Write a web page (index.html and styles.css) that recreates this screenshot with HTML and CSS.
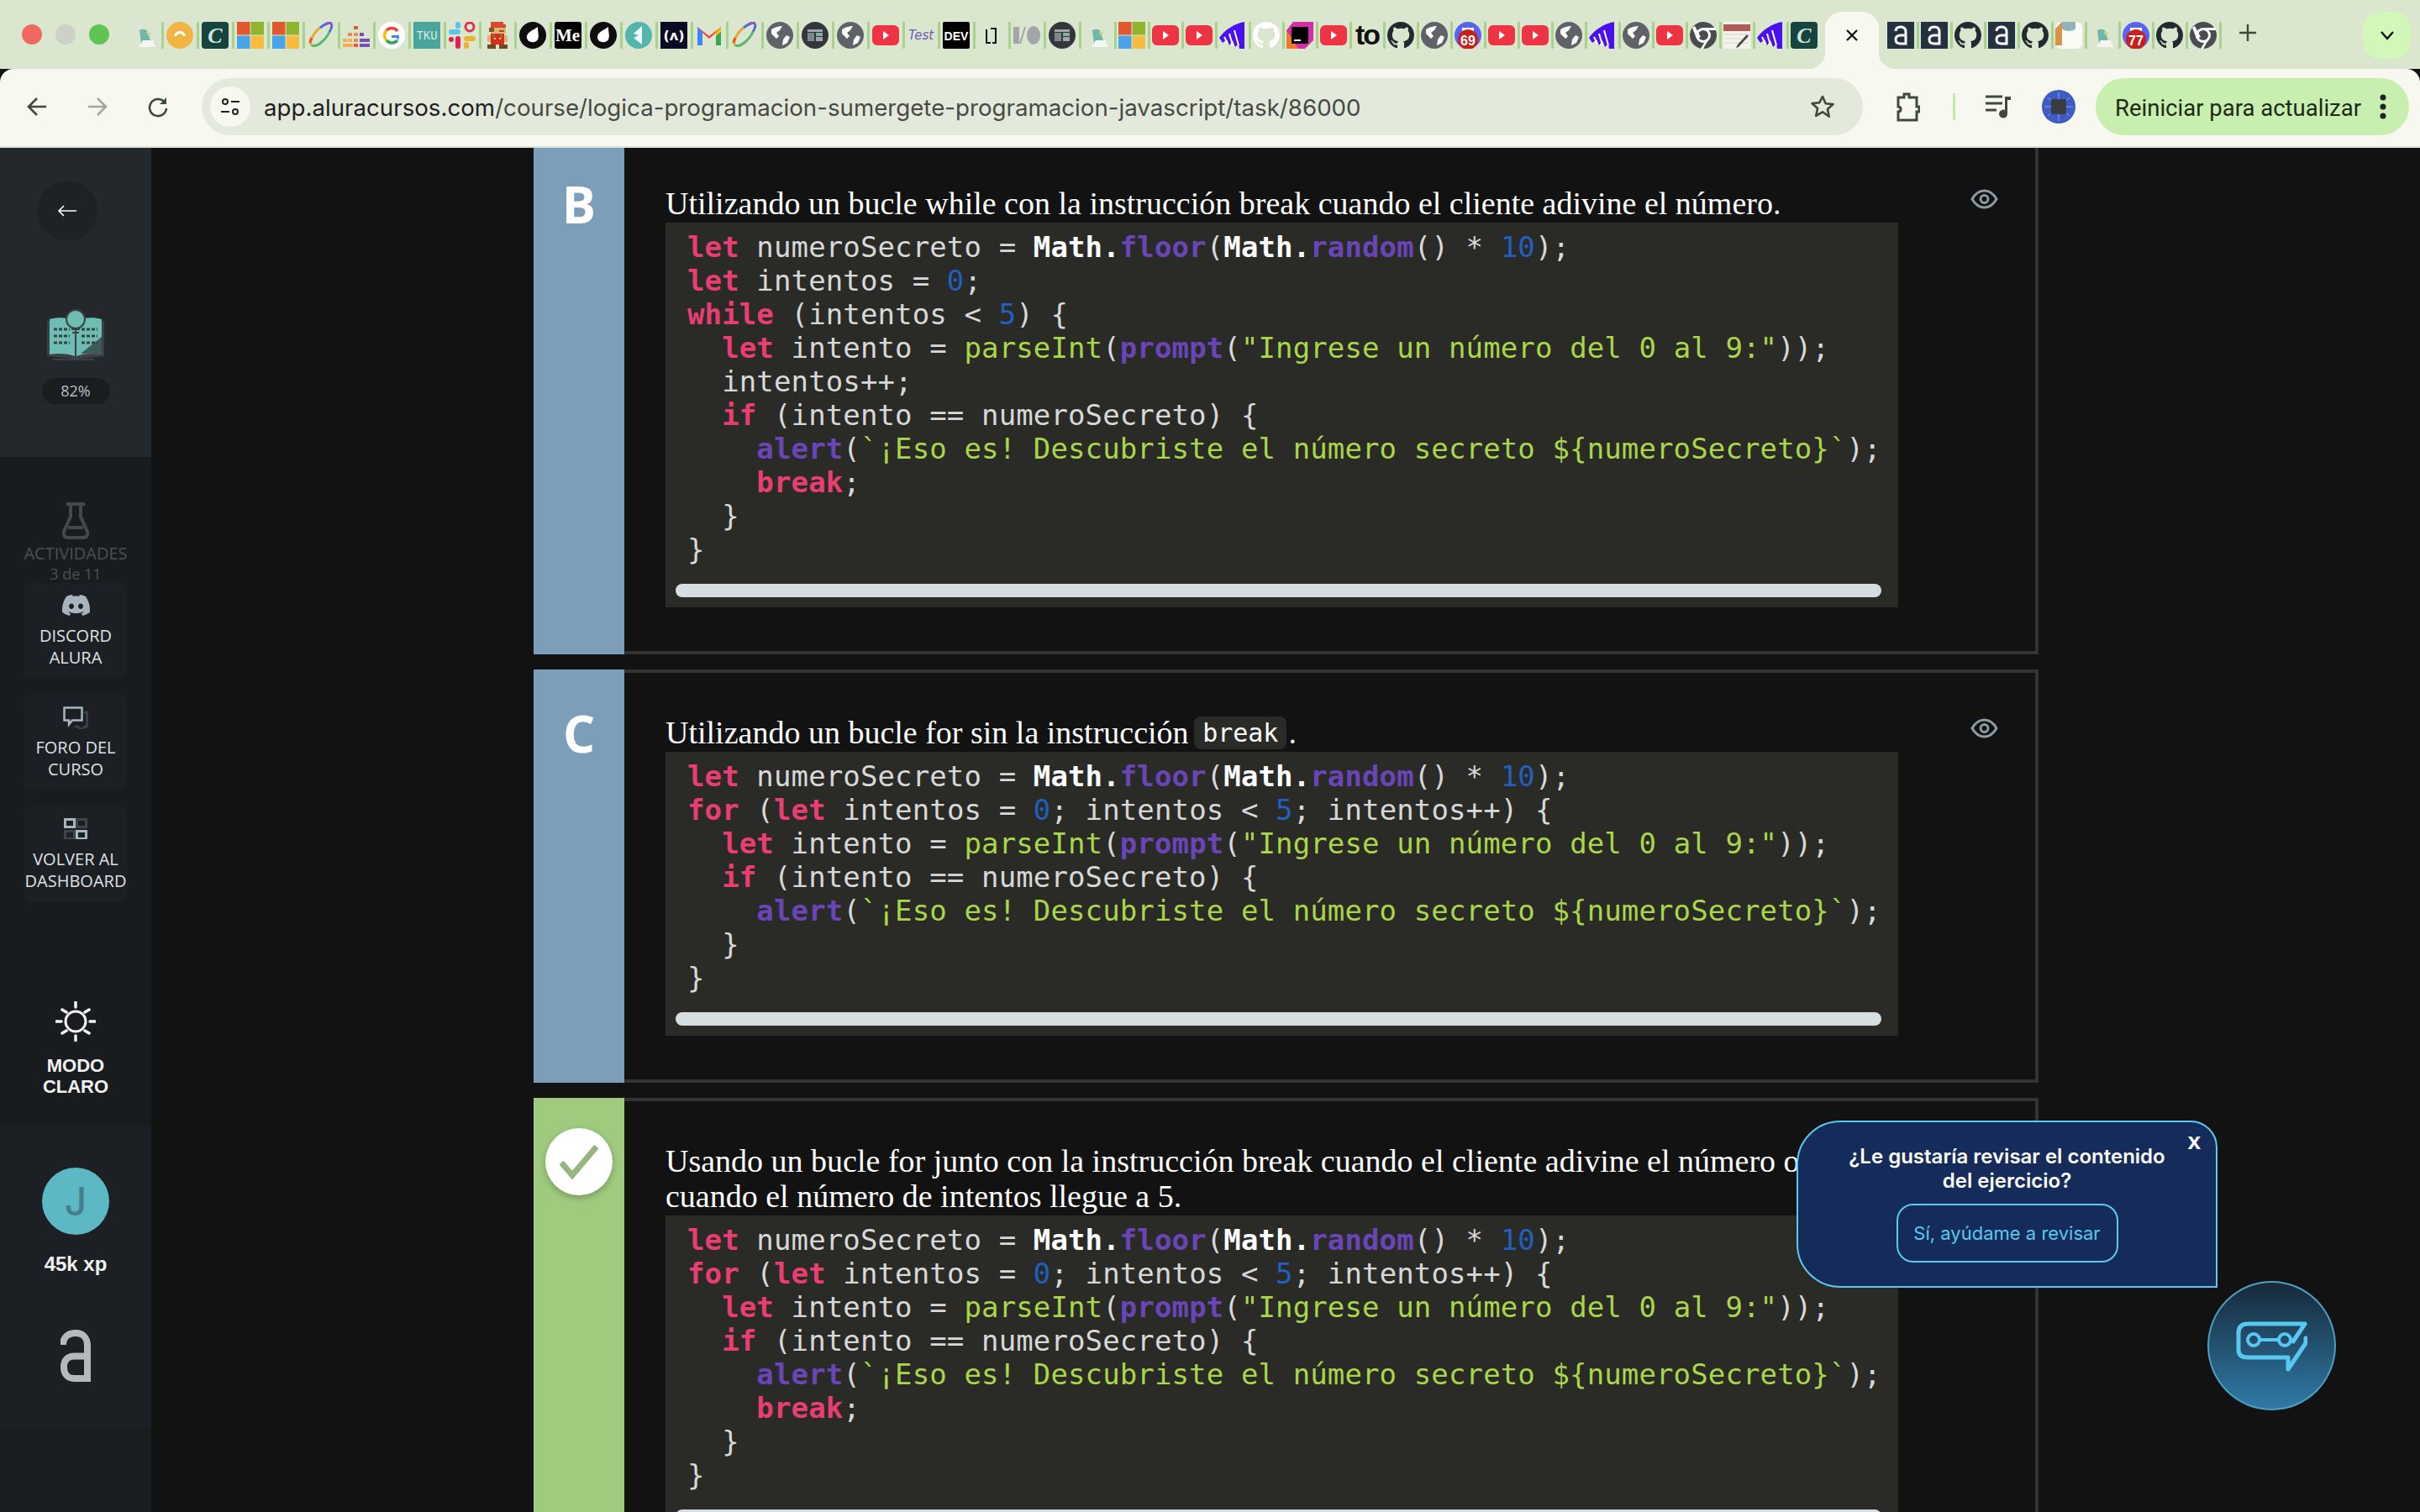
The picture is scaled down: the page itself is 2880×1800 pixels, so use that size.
FILE: index.html
```html
<!DOCTYPE html>
<html lang="es">
<head>
    <meta charset="UTF-8">
    <title>Lógica de programación - Alura</title>
    <link rel="stylesheet" href="styles.css">
</head>
<body>
    <svg class="defs" width="0" height="0">
        <symbol id="parrot" viewBox="0 0 32 32"><path d="M8 2h6v7H8z" fill="#dfe6df"/><path d="M10 10c6-3 11 0 11 6l3 10H12z" fill="#6fb7a6"/><path d="M14 22h12l3 8H9z" fill="#f4f6f2"/><path d="M18 11l6 3-5 2z" fill="#c9d08a"/></symbol>
        <symbol id="ms" viewBox="0 0 32 32"><path d="M0 0h15.500v15.500H0z" fill="#e2582e"/><path d="M16.500 0H32v15.500H16.500z" fill="#8fb52e"/><path d="M0 16.500h15.500V32H0z" fill="#4aa3e8"/><path d="M16.500 16.500H32V32H16.500z" fill="#f6bc3e"/></symbol>
        <symbol id="planet" viewBox="0 0 32 32"><path d="M5 28C1 24 8 12 15 7" fill="none" stroke="#e8a63a" stroke-width="3"/><path d="M5 28c6 3 17-7 21-16" fill="none" stroke="#55b86a" stroke-width="3"/><path d="M15 7c5-4 11-7 13-5 2 3 0 7-2 10" fill="none" stroke="#4c6fd8" stroke-width="3"/><path d="M22 3c2-2 5-2 6-1" fill="none" stroke="#a04fc0" stroke-width="3"/><path d="M3 25c0-2 1-4 2-6" fill="none" stroke="#e2582e" stroke-width="3"/></symbol>
        <symbol id="drop" viewBox="0 0 32 32"><circle cx="16" cy="16" r="16" fill="#0e0e0e"/><path d="M22 6c0 8 2 10 0 15-3 5-12 4-13-2-1-6 7-9 13-13z" fill="#fff"/></symbol>
        <symbol id="globe" viewBox="0 0 32 32"><circle cx="16" cy="16" r="16" fill="#5f6368"/><path d="M6 9c5-3 9-4 13-4l-3 5-4 3 3 4-3 3-6-6zM24 16l4 2-3 7-6 3 1-7z" fill="#fff"/></symbol>
        <symbol id="darkc" viewBox="0 0 32 32"><circle cx="16" cy="16" r="16" fill="#33373c"/><path d="M7 9h18v3H7z" fill="#9fa6a8"/><path d="M7 13h8v10H7z" fill="#7a8a8c"/><path d="M17 13h8v4h-8z" fill="#7fb0a8"/><path d="M17 18h8v5h-8z" fill="#9fa6a8"/></symbol>
        <symbol id="yt" viewBox="0 0 32 32"><rect y="4" width="32" height="24" rx="6" fill="#ee3344"/><path d="M13 11l7 5-7 5z" fill="#fff"/></symbol>
        <symbol id="ghost" viewBox="0 0 32 32"><path d="M30 0v32h-6l-1-6-4 4-3-8-4 6-3-7-5 4-4-6C6 10 18 2 30 0z" fill="#4a10f0"/><path d="M12 14l4 14M18 10l5 18M6 18l4 8" stroke="#fff" stroke-width="2"/></symbol>
        <symbol id="gh" viewBox="0 0 16 16"><path d="M8 0C3.580 0 0 3.580 0 8c0 3.540 2.290 6.530 5.470 7.590.4.070.55-.17.55-.38 0-.19-.01-.82-.01-1.490-2.010.37-2.530-.49-2.690-.94-.09-.23-.48-.94-.82-1.130-.28-.15-.68-.52-.01-.53.63-.01 1.080.58 1.230.82.72 1.210 1.870.87 2.330.66.07-.52.28-.87.51-1.070-1.780-.2-3.640-.89-3.640-3.950 0-.87.31-1.590.82-2.150-.08-.2-.36-1.020.08-2.120 0 0 .67-.21 2.200.82.64-.18 1.320-.27 2-.27.68 0 1.360.09 2 .27 1.530-1.040 2.200-.82 2.200-.82.44 1.100.16 1.920.08 2.120.51.56.82 1.270.82 2.150 0 3.070-1.870 3.750-3.650 3.950.29.25.54.73.54 1.480 0 1.070-.01 1.930-.01 2.200 0 .21.15.46.55.38A8.013 8.013 0 0016 8c0-4.420-3.580-8-8-8z"/></symbol>
        <symbol id="chrome" viewBox="0 0 32 32"><circle cx="16" cy="16" r="16" fill="#4a4d50"/><circle cx="16" cy="16" r="9" fill="#fff"/><circle cx="16" cy="16" r="6" fill="#4a4d50"/><path d="M16 7h14l2 3H17zM8 20L3 7l3-2 7 13zM23 20l-7 12h-3l7-12z" fill="#fff"/></symbol>
        <symbol id="alura" viewBox="0 0 32 32"><rect width="32" height="32" fill="#233240"/><path d="M10 11c0-3 2-5 6-5s6 2 6 6v14h-6c-4 0-6-2-6-5s2-5 6-5h6" fill="none" stroke="#fff" stroke-width="3"/></symbol>
        <symbol id="discord" viewBox="0 0 16 16"><path d="M13.545 2.907a13.227 13.227 0 0 0-3.257-1.011.05.05 0 0 0-.052.025c-.141.25-.297.577-.406.833a12.19 12.19 0 0 0-3.658 0 8.258 8.258 0 0 0-.412-.833.051.051 0 0 0-.052-.025c-1.125.194-2.22.534-3.257 1.011a.041.041 0 0 0-.021.018C.356 6.024-.213 9.047.066 12.032c.001.014.01.028.021.037a13.276 13.276 0 0 0 3.995 2.02.05.05 0 0 0 .056-.019c.308-.42.582-.863.818-1.329a.05.05 0 0 0-.01-.059.051.051 0 0 0-.018-.011 8.875 8.875 0 0 1-1.248-.595.05.05 0 0 1-.02-.066.051.051 0 0 1 .015-.019c.084-.063.168-.129.248-.195a.05.05 0 0 1 .051-.007c2.619 1.196 5.454 1.196 8.041 0a.052.052 0 0 1 .053.007c.08.066.164.132.248.195a.051.051 0 0 1-.004.085 8.254 8.254 0 0 1-1.249.594.05.05 0 0 0-.03.03.052.052 0 0 0 .003.041c.24.465.515.909.817 1.329a.05.05 0 0 0 .056.019 13.235 13.235 0 0 0 4.001-2.02.049.049 0 0 0 .021-.037c.334-3.451-.559-6.449-2.366-9.106a.034.034 0 0 0-.02-.019Zm-8.198 7.307c-.789 0-1.438-.724-1.438-1.612 0-.889.637-1.613 1.438-1.613.807 0 1.45.73 1.438 1.613 0 .888-.637 1.612-1.438 1.612Zm5.316 0c-.788 0-1.438-.724-1.438-1.612 0-.889.637-1.613 1.438-1.613.807 0 1.451.73 1.438 1.613 0 .888-.631 1.612-1.438 1.612Z"/></symbol>
        <symbol id="eye" viewBox="0 0 33 24"><path d="M2 12C6 5 11 2 16.500 2S27 5 31 12c-4 7-9 10-14.500 10S6 19 2 12z" fill="none" stroke="#8b9ba6" stroke-width="3"/><circle cx="16.500" cy="12" r="4.500" fill="none" stroke="#8b9ba6" stroke-width="3"/></symbol>
    </svg>

    <div class="tabstrip">
        <div class="lights">
            <span class="light light-red"></span>
            <span class="light light-off"></span>
            <span class="light light-green"></span>
        </div>
        <div class="tabs">
            <span class="tab"><svg class="fav"><use href="#parrot"/></svg></span>
            <span class="tab"><svg class="fav" viewBox="0 0 32 32"><circle cx="16" cy="16" r="16" fill="#f2b544"/><path d="M9 17c2-8 12-8 14 0l-3 0c-2-4-6-4-8 0z" fill="#fff"/></svg></span>
            <span class="tab"><svg class="fav" viewBox="0 0 32 32"><rect width="32" height="32" rx="4" fill="#17443f"/><text x="16" y="25" text-anchor="middle" class="fav-c">C</text></svg></span>
            <span class="tab"><svg class="fav"><use href="#ms"/></svg></span>
            <span class="tab"><svg class="fav"><use href="#ms"/></svg></span>
            <span class="tab"><svg class="fav"><use href="#planet"/></svg></span>
            <span class="tab"><svg class="fav" viewBox="0 0 32 32"><path d="M13 5h5v4h-5z" fill="#e25a3a"/><path d="M6 13h5v4H6zM13 13h5v4h-5z" fill="#e8885a"/><path d="M20 13h5v4h-5z" fill="#7a4fb0"/><path d="M0 20h5v4H0zM6 20h5v4H6z" fill="#eeb050"/><path d="M13 20h5v4h-5z" fill="#e8885a"/><path d="M20 20h12v4H20z" fill="#7a4fb0"/><path d="M0 26h12v4H0z" fill="#eeb050"/><path d="M13 26h5v4h-5z" fill="#e25a3a"/><path d="M20 26h12v4H20z" fill="#7a4fb0"/></svg></span>
            <span class="tab"><svg class="fav" viewBox="0 0 32 32"><circle cx="16" cy="16" r="16" fill="#fff"/><path d="M23 11a8.500 8.500 0 0 0-13-1" fill="none" stroke="#ea4335" stroke-width="3.500"/><path d="M10 10a8.500 8.500 0 0 0 0 12" fill="none" stroke="#fbbc05" stroke-width="3.500"/><path d="M10 22a8.500 8.500 0 0 0 13 0" fill="none" stroke="#34a853" stroke-width="3.500"/><path d="M24 22c1-2 1-4 1-6h-9v3h6" fill="#4285f4"/></svg></span>
            <span class="tab"><svg class="fav" viewBox="0 0 32 32"><rect width="32" height="32" fill="#4aa59a"/><text x="16" y="21" text-anchor="middle" class="fav-tku">TKU</text></svg></span>
            <span class="tab"><svg class="fav" viewBox="0 0 32 32"><rect x="0" y="9" width="14" height="6" rx="3" fill="#5cc4ec"/><rect x="8" y="0" width="6" height="8" rx="3" fill="#5cc4ec"/><circle cx="25" cy="6" r="5" fill="none" stroke="#d8354f" stroke-width="3"/><rect x="18" y="17" width="14" height="6" rx="3" fill="#ecb22e"/><rect x="18" y="24" width="6" height="8" rx="3" fill="#ecb22e"/><rect x="0" y="18" width="6" height="6" rx="3" fill="#e01e5a"/><rect x="8" y="17" width="6" height="15" rx="3" fill="#e01e5a"/></svg></span>
            <span class="tab"><svg class="fav" viewBox="0 0 32 32"><path d="M8 0h15v3h3v4H8z" fill="#d84a2c"/><path d="M8 7h18v7H8z" fill="#e8b070"/><path d="M6 7h6v5H6zM18 10h6v2h-6z" fill="#7a5a30"/><path d="M8 14h16v13H8z" fill="#d82c20"/><path d="M10 14h3v6h-3zM19 14h3v6h-3z" fill="#8a6a30"/><path d="M12 19h2v2h-2zM18 19h2v2h-2z" fill="#f2d050"/><path d="M4 16h4v8H4zM24 16h4v8h-4z" fill="#e8b070"/><path d="M4 27h10v5H4zM18 27h10v5H18z" fill="#6a4a20"/></svg></span>
            <span class="tab"><svg class="fav"><use href="#drop"/></svg></span>
            <span class="tab"><svg class="fav" viewBox="0 0 32 32"><rect width="32" height="32" rx="3" fill="#000"/><text x="1" y="23" class="fav-me">Me</text></svg></span>
            <span class="tab"><svg class="fav"><use href="#drop"/></svg></span>
            <span class="tab"><svg class="fav" viewBox="0 0 32 32"><circle cx="16" cy="16" r="16" fill="#55b5ae"/><path d="M20 5v22l-10-8 6-3-6-2z" fill="#fff" opacity=".9"/></svg></span>
            <span class="tab"><svg class="fav" viewBox="0 0 32 32"><rect width="32" height="32" fill="#0a0a23"/><text x="16" y="22" text-anchor="middle" class="fav-fcc">(ʌ)</text></svg></span>
            <span class="tab"><svg class="fav" viewBox="0 0 32 32"><path d="M2 6l14 11L30 6v22h-6V13l-8 7-8-7v15H2z" fill="#ea4335"/><path d="M2 6v22h6V12z" fill="#4285f4"/><path d="M30 6v22h-6V12z" fill="#34a853"/><path d="M24 12l6-6v6l-6 5z" fill="#fbbc05"/></svg></span>
            <span class="tab"><svg class="fav"><use href="#planet"/></svg></span>
            <span class="tab"><svg class="fav"><use href="#globe"/></svg></span>
            <span class="tab"><svg class="fav"><use href="#darkc"/></svg></span>
            <span class="tab"><svg class="fav"><use href="#globe"/></svg></span>
            <span class="tab"><svg class="fav"><use href="#yt"/></svg></span>
            <span class="tab"><svg class="fav" viewBox="0 0 32 32"><text x="1" y="21" textLength="30" lengthAdjust="spacingAndGlyphs" class="fav-test">Test</text></svg></span>
            <span class="tab"><svg class="fav" viewBox="0 0 32 32"><rect width="32" height="32" rx="2" fill="#000"/><text x="16" y="22" text-anchor="middle" class="fav-dev">DEV</text></svg></span>
            <span class="tab"><svg class="fav" viewBox="0 0 32 32"><path d="M10 9v16h5" fill="none" stroke="#111" stroke-width="2"/><path d="M15 8h6v17h-4" fill="none" stroke="#111" stroke-width="2"/></svg></span>
            <span class="tab"><svg class="fav" viewBox="0 0 32 32"><path d="M0 6h7v20H0z" fill="#a3a6a9"/><path d="M8 26L14 6" stroke="#a3a6a9" stroke-width="2"/><ellipse cx="24" cy="16" rx="8" ry="11" fill="#a3a6a9"/></svg></span>
            <span class="tab"><svg class="fav"><use href="#darkc"/></svg></span>
            <span class="tab"><svg class="fav"><use href="#parrot"/></svg></span>
        </div>
        <div class="tabs tabs-small">
            <span class="tab"><svg class="fav"><use href="#ms"/></svg></span>
            <span class="tab"><svg class="fav"><use href="#yt"/></svg></span>
            <span class="tab"><svg class="fav"><use href="#yt"/></svg></span>
            <span class="tab"><svg class="fav"><use href="#ghost"/></svg></span>
            <span class="tab"><svg class="fav fav-ghwhite"><use href="#gh"/></svg></span>
            <span class="tab"><svg class="fav" viewBox="0 0 32 32"><path d="M8 0h24v22L22 32H0V10z" fill="#d62ea8"/><path d="M0 10v22h14z" fill="#f07a2a"/><rect x="6" y="6" width="20" height="20" fill="#000"/><rect x="9" y="21" width="8" height="2" fill="#fff"/></svg></span>
            <span class="tab"><svg class="fav"><use href="#yt"/></svg></span>
            <span class="tab"><svg class="fav" viewBox="0 0 32 32"><text x="16" y="27" text-anchor="middle" class="fav-to">to</text></svg></span>
            <span class="tab"><svg class="fav fav-gh"><use href="#gh"/></svg></span>
            <span class="tab"><svg class="fav"><use href="#globe"/></svg></span>
            <span class="tab"><svg class="fav" viewBox="0 0 32 32"><circle cx="16" cy="16" r="16" fill="#5865f2"/><path d="M9 7h14v6H9z" fill="#fff"/><circle cx="16" cy="21" r="12" fill="#c5221f"/><text x="16" y="28" text-anchor="middle" class="fav-badge">69</text></svg></span>
            <span class="tab"><svg class="fav"><use href="#yt"/></svg></span>
            <span class="tab"><svg class="fav"><use href="#yt"/></svg></span>
            <span class="tab"><svg class="fav"><use href="#globe"/></svg></span>
            <span class="tab"><svg class="fav"><use href="#ghost"/></svg></span>
            <span class="tab"><svg class="fav"><use href="#globe"/></svg></span>
            <span class="tab"><svg class="fav"><use href="#yt"/></svg></span>
            <span class="tab"><svg class="fav"><use href="#chrome"/></svg></span>
            <span class="tab"><svg class="fav" viewBox="0 0 32 32"><rect width="32" height="32" fill="#f4f2ea"/><path d="M0 3h32v8H0z" fill="#b25a55"/><path d="M2 15h28M2 20h28M2 25h28" stroke="#d8d6cc"/><path d="M30 17L18 30l-3 1 2-4L28 15z" fill="#4a4a4a"/></svg></span>
            <span class="tab"><svg class="fav"><use href="#ghost"/></svg></span>
            <span class="tab tab-nosep"><svg class="fav" viewBox="0 0 32 32"><rect width="32" height="32" rx="4" fill="#17443f"/><text x="16" y="25" text-anchor="middle" class="fav-c">C</text></svg></span>
        </div>
        <div class="tab-active">
            <svg class="tab-close" viewBox="0 0 16 16"><path d="M2 2l12 12M14 2L2 14" fill="none" stroke="#111" stroke-width="2.200"/></svg>
        </div>
        <div class="tabs tabs-small tabs-after">
            <span class="tab"><svg class="fav"><use href="#alura"/></svg></span>
            <span class="tab"><svg class="fav"><use href="#alura"/></svg></span>
            <span class="tab"><svg class="fav fav-gh"><use href="#gh"/></svg></span>
            <span class="tab"><svg class="fav"><use href="#alura"/></svg></span>
            <span class="tab"><svg class="fav fav-gh"><use href="#gh"/></svg></span>
            <span class="tab"><svg class="fav" viewBox="0 0 32 32"><rect width="32" height="32" rx="7" fill="#fbfbf6"/><path d="M0 8c3-3 5-5 8-8v28H0z" fill="#d6914a"/><path d="M8 0h16v8c-3 4-13 4-16 0z" fill="#8fb3b8"/></svg></span>
            <span class="tab"><svg class="fav"><use href="#parrot"/></svg></span>
            <span class="tab"><svg class="fav" viewBox="0 0 32 32"><circle cx="16" cy="16" r="16" fill="#5865f2"/><path d="M9 7h14v6H9z" fill="#fff"/><circle cx="16" cy="21" r="12" fill="#c5221f"/><text x="16" y="28" text-anchor="middle" class="fav-badge">77</text></svg></span>
            <span class="tab"><svg class="fav fav-gh"><use href="#gh"/></svg></span>
            <span class="tab"><svg class="fav"><use href="#chrome"/></svg></span>
        </div>
        <svg class="new-tab" viewBox="0 0 22 22"><path d="M11 1v20M1 11h20" fill="none" stroke="#3f4a3a" stroke-width="2.400"/></svg>
        <div class="tab-search">
            <svg viewBox="0 0 18 12"><path d="M2 2l7 8 7-8" fill="none" stroke="#111" stroke-width="2.400"/></svg>
        </div>
    </div>

    <div class="toolbar">
        <span class="nav-btn"><svg viewBox="0 0 26 26"><path d="M24 13H3M13 3L3 13l10 10" fill="none" stroke="#3f4a3a" stroke-width="2.600"/></svg></span>
        <span class="nav-btn"><svg viewBox="0 0 26 26"><path d="M2 13h21M13 3l10 10-10 10" fill="none" stroke="#a3a8a0" stroke-width="2.600"/></svg></span>
        <span class="nav-btn"><svg viewBox="0 0 26 26"><path d="M21 8a10 10 0 1 0 2 7" fill="none" stroke="#3f4a3a" stroke-width="2.600"/><path d="M23 2v8h-8z" fill="#3f4a3a"/></svg></span>
        <div class="omnibox">
            <span class="site-info"><svg viewBox="0 0 24 24"><circle cx="6" cy="6" r="3" fill="none" stroke="#222" stroke-width="2"/><path d="M13 6h10M1 18h10" stroke="#222" stroke-width="2"/><circle cx="18" cy="18" r="3" fill="none" stroke="#222" stroke-width="2"/></svg></span>
            <span class="url"><span class="url-host">app.aluracursos.com</span>/course/logica-programacion-sumergete-programacion-javascript/task/86000</span>
            <svg class="star" viewBox="0 0 30 30"><path d="M15 3l3.700 8.200 8.800.9-6.600 5.900 1.900 8.800L15 21.300l-7.800 4.500 1.900-8.800-6.600-5.900 8.800-.9z" fill="none" stroke="#3f4a3a" stroke-width="2.600" stroke-linejoin="round"/></svg>
        </div>
        <svg class="ext-icon" viewBox="0 0 30 36"><path d="M4 7h7V3h6v4h9v11h3v6h-3v10H4V24c4 0 4-6 0-6z" fill="none" stroke="#3f4a3a" stroke-width="3"/></svg>
        <span class="tool-sep"></span>
        <svg class="media-icon" viewBox="0 0 32 30"><path d="M1 3h20M1 11h20M1 19h13" stroke="#3f4a3a" stroke-width="3"/><path d="M24 3h7v4h-4v16a5 5 0 1 1-3-4z" fill="#3f4a3a"/></svg>
        <svg class="profile" viewBox="0 0 40 40"><circle cx="20" cy="20" r="20" fill="#3f5bc4"/><path d="M20 3v34M3 20h34M7 9l26 22M33 9L7 31" stroke="#8ea0e8" stroke-width="1"/><rect x="11" y="11" width="18" height="18" fill="#3a3e42"/></svg>
        <div class="update-pill">
            <span class="update-text">Reiniciar para actualizar</span>
            <svg viewBox="0 0 8 30"><circle cx="4" cy="4" r="3.500" fill="#222"/><circle cx="4" cy="15" r="3.500" fill="#222"/><circle cx="4" cy="26" r="3.500" fill="#222"/></svg>
        </div>
    </div>

    <div class="app">
        <aside class="sidebar">
            <div class="side-top">
                <span class="back-btn"><svg viewBox="0 0 24 14"><path d="M23 7H2M8 1L2 7l6 6" fill="none" stroke="#fff" stroke-width="1.600"/></svg></span>
                <svg class="book" viewBox="0 0 72 61">
                    <path d="M2 14h68v42l-31 3h-6L2 56z" fill="#3a4045"/>
                    <path d="M5 12c10-3 23-2 30 2v42c-8-3-20-4-30-2z" fill="#6dbdb2"/>
                    <path d="M67 12c-10-3-23-2-30 2v42c8-3 20-4 30-2z" fill="#6dbdb2"/>
                    <path d="M42 53l25-20v21z" fill="#3f5a58"/>
                    <circle cx="36" cy="12" r="11" fill="#6dbdb2" stroke="#3a4045" stroke-width="2"/>
                    <path d="M31 24h10M32 28h8" stroke="#3a4045" stroke-width="2"/>
                    <path d="M10 24h19M10 32h19M10 40h19M43 24h19M43 32h19M43 40h19" stroke="#3a4045" stroke-width="3" stroke-dasharray="4 2"/>
                    <path d="M8 60h50" stroke="#3a4045" stroke-width="2"/>
                </svg>
                <span class="progress">82%</span>
            </div>
            <div class="side-nav">
                <svg class="flask" viewBox="0 0 32 44"><path d="M5 2h22M10 2v15L2 35c-1 4 1 7 5 7h18c4 0 6-3 5-7L22 17V2M7 30h18" fill="none" stroke="#42484c" stroke-width="4"/></svg>
                <span class="nav-dim">ACTIVIDADES</span>
                <span class="nav-dim nav-count">3 de 11</span>
                <a class="nav-card" href="#">
                    <span class="nav-icon"><svg class="ico-discord"><use href="#discord"/></svg></span>
                    DISCORD<br>ALURA
                </a>
                <a class="nav-card" href="#">
                    <span class="nav-icon"><svg class="ico-forum" viewBox="0 -3 30 30"><path d="M25 7h3.500v17h-3l-3 4-5-4h-4" fill="none" stroke="#3e444a" stroke-width="2.500"/><path d="M1.500 1.500h21v15H11l-4 5v-5H1.500z" fill="#1c1f23" stroke="#a8b5bf" stroke-width="2.500"/></svg></span>
                    FORO DEL<br>CURSO
                </a>
                <a class="nav-card nav-card-last" href="#">
                    <span class="nav-icon"><svg viewBox="0 -1 28 26"><path d="M1.500 1.500h11v9h-11zM15.500 15.500h11v9h-11z" fill="none" stroke="#a8b5bf" stroke-width="3"/><path d="M15.500 1.500h11v9h-11zM1.500 15.500h11v9h-11z" fill="none" stroke="#3e444a" stroke-width="3"/></svg></span>
                    VOLVER AL<br>DASHBOARD
                </a>
                <svg class="sun" viewBox="0 0 48 48"><circle cx="24" cy="24" r="12" fill="none" stroke="#f2f2f2" stroke-width="3"/><path d="M24 1v6M24 41v6M1 24h6M41 24h6M8 10l5 3M35 35l5 3M40 10l-5 3M13 35l-5 3" stroke="#f2f2f2" stroke-width="3.500" stroke-linecap="round"/></svg>
                <span class="mode-label">MODO<br>CLARO</span>
            </div>
            <div class="side-user">
                <span class="avatar">J</span>
                <span class="xp">45k xp</span>
                <svg class="logo-a" viewBox="0 0 36 62"><path d="M3 18C3 8 10 4 18 4 27 4 32 10 32 19v39H16C8 58 4 52 4 44.500 4 36 9 31.500 16 31.500h16" fill="none" stroke="#b4b9bd" stroke-width="8"/></svg>
            </div>
            <div class="side-rest"></div>
        </aside>

        <main class="main">
            <div class="answers">
                <article class="answer">
                    <div class="answer-bar"><span class="answer-letter">B</span></div>
                    <div class="answer-body">
                        <svg class="eye"><use href="#eye"/></svg>
                        <p class="answer-text">Utilizando un bucle while con la instrucción break cuando el cliente adivine el número.</p>
                        <div class="code-box">
<pre class="code"><span class="k">let</span> numeroSecreto = <span class="o">Math.</span><span class="f">floor</span>(<span class="o">Math.</span><span class="f">random</span>() * <span class="n">10</span>);
<span class="k">let</span> intentos = <span class="n">0</span>;
<span class="k">while</span> (intentos &lt; <span class="n">5</span>) {
  <span class="k">let</span> intento = <span class="s">parseInt</span>(<span class="f">prompt</span>(<span class="s">"Ingrese un número del 0 al 9:"</span>));
  intentos++;
  <span class="k">if</span> (intento == numeroSecreto) {
    <span class="f">alert</span>(<span class="s">`¡Eso es! Descubriste el número secreto ${numeroSecreto}`</span>);
    <span class="k">break</span>;
  }
}</pre>
                            <div class="code-scroll"></div>
                        </div>
                    </div>
                </article>

                <article class="answer">
                    <div class="answer-bar"><span class="answer-letter">C</span></div>
                    <div class="answer-body">
                        <svg class="eye"><use href="#eye"/></svg>
                        <p class="answer-text">Utilizando un bucle for sin la instrucción <code class="inline-code">break</code>.</p>
                        <div class="code-box">
<pre class="code"><span class="k">let</span> numeroSecreto = <span class="o">Math.</span><span class="f">floor</span>(<span class="o">Math.</span><span class="f">random</span>() * <span class="n">10</span>);
<span class="k">for</span> (<span class="k">let</span> intentos = <span class="n">0</span>; intentos &lt; <span class="n">5</span>; intentos++) {
  <span class="k">let</span> intento = <span class="s">parseInt</span>(<span class="f">prompt</span>(<span class="s">"Ingrese un número del 0 al 9:"</span>));
  <span class="k">if</span> (intento == numeroSecreto) {
    <span class="f">alert</span>(<span class="s">`¡Eso es! Descubriste el número secreto ${numeroSecreto}`</span>);
  }
}</pre>
                            <div class="code-scroll"></div>
                        </div>
                    </div>
                </article>

                <article class="answer">
                    <div class="answer-bar answer-bar-ok">
                        <span class="check-circle"><svg viewBox="0 0 46 42"><path d="M2 22l13 15L44 3" fill="none" stroke="#96b57f" stroke-width="7"/></svg></span>
                    </div>
                    <div class="answer-body">
                        <p class="answer-text">Usando un bucle for junto con la instrucción break cuando el cliente adivine el número o cuando el número de intentos llegue a 5.</p>
                        <div class="code-box">
<pre class="code"><span class="k">let</span> numeroSecreto = <span class="o">Math.</span><span class="f">floor</span>(<span class="o">Math.</span><span class="f">random</span>() * <span class="n">10</span>);
<span class="k">for</span> (<span class="k">let</span> intentos = <span class="n">0</span>; intentos &lt; <span class="n">5</span>; intentos++) {
  <span class="k">let</span> intento = <span class="s">parseInt</span>(<span class="f">prompt</span>(<span class="s">"Ingrese un número del 0 al 9:"</span>));
  <span class="k">if</span> (intento == numeroSecreto) {
    <span class="f">alert</span>(<span class="s">`¡Eso es! Descubriste el número secreto ${numeroSecreto}`</span>);
    <span class="k">break</span>;
  }
}</pre>
                            <div class="code-scroll"></div>
                        </div>
                    </div>
                </article>
            </div>
        </main>
    </div>

    <div class="review-popup">
        <span class="review-close">x</span>
        <p class="review-title">¿Le gustaría revisar el contenido del ejercicio?</p>
        <a class="review-btn" href="#">Sí, ayúdame a revisar</a>
    </div>
    <div class="bot-btn">
        <svg viewBox="0 0 85 62"><path d="M82 5H14Q3 5 3 16v20q0 9 11 9h48v14l21-31v-6M82 5L68 26" fill="none" stroke="#58c8f0" stroke-width="5" stroke-linejoin="round" stroke-linecap="round"/><circle cx="21" cy="24" r="7" fill="none" stroke="#58c8f0" stroke-width="4"/><circle cx="58" cy="24" r="7" fill="none" stroke="#58c8f0" stroke-width="4"/><path d="M28 24h23" stroke="#58c8f0" stroke-width="4"/></svg>
    </div>
</body>
</html>
```

FILE: styles.css
```css
* {
    box-sizing: border-box;
}
html, body {
    height: 100%;
}
body {
    margin: 0;
    background: #121212;
    color: #fff;
    font-family: "Open Sans", sans-serif;
    overflow: hidden;
    position: relative;
}
a {
    color: inherit;
    text-decoration: none;
}
.defs {
    position: absolute;
}

/* browser chrome */
.tabstrip {
    display: flex;
    height: 82px;
    background: #dbe6cf;
}
.lights {
    display: flex;
    gap: 16px;
    width: 151px;
    padding: 29px 0 0 26px;
}
.light {
    width: 24px;
    height: 24px;
    border-radius: 50%;
}
.light-red { background: #ef6a60; }
.light-off { background: #cdd2c8; }
.light-green { background: #5ec453; }
.tabs {
    display: flex;
    padding-top: 26px;
}
.tab {
    display: flex;
    justify-content: center;
    width: 42px;
    height: 32px;
    position: relative;
}
.tab::after {
    content: "";
    position: absolute;
    right: -2px;
    top: 0;
    width: 3px;
    height: 32px;
    background: #a9d28f;
}
.tab-nosep::after {
    display: none;
}
.tabs-small .tab {
    width: 40px;
}
.tabs-after {
    margin-left: 6px;
}
.fav {
    width: 32px;
    height: 32px;
    flex: none;
}
.fav-gh { fill: #24292f; }
.fav-ghwhite { fill: #fff; }
.fav-c { font: italic 700 26px "Liberation Serif", serif; fill: #cfe5df; }
.fav-tku { font: 400 14px "Liberation Mono", monospace; fill: #d5ece8; }
.fav-me { font: 700 21px "Liberation Serif", serif; fill: #fff; }
.fav-fcc { font: 700 16px "DejaVu Sans", sans-serif; fill: #fff; }
.fav-test { font: italic 400 15px "DejaVu Sans", sans-serif; fill: #6d5bb8; }
.fav-dev { font: 700 14px "Liberation Sans", sans-serif; fill: #fff; }
.fav-to { font: 700 34px "Liberation Sans", sans-serif; fill: #111; letter-spacing: -2px; }
.fav-badge { font: 700 16px "Liberation Sans", sans-serif; fill: #fff; }
.tab-active {
    width: 64px;
    height: 68px;
    margin: 14px 0 0 5px;
    background: #f7f8f0;
    border-radius: 20px 20px 0 0;
    display: flex;
    justify-content: center;
    padding-top: 20px;
    position: relative;
}
.tab-active::before,
.tab-active::after {
    content: "";
    position: absolute;
    bottom: 0;
    width: 20px;
    height: 20px;
}
.tab-active::before {
    left: -20px;
    background: radial-gradient(circle at 0 0, transparent 20px, #f7f8f0 20.5px);
}
.tab-active::after {
    right: -20px;
    background: radial-gradient(circle at 100% 0, transparent 20px, #f7f8f0 20.5px);
}
.tab-close {
    width: 16px;
    height: 16px;
}
.new-tab {
    width: 22px;
    height: 22px;
    margin: 28px 0 0 22px;
}
.tab-search {
    display: flex;
    align-items: center;
    justify-content: center;
    width: 57px;
    height: 56px;
    margin: 14px 0 0 126px;
    background: #d3f6b9;
    border-radius: 20px;
}
.tab-search svg {
    width: 18px;
    height: 12px;
}
.toolbar {
    display: flex;
    align-items: center;
    height: 94px;
    padding: 0 13px 2px 8px;
    background: #f7f8f0;
    border-bottom: 2px solid #e0e2d8;
    border-radius: 16px 16px 0 0;
}
.nav-btn {
    display: flex;
    justify-content: center;
    width: 72px;
}
.nav-btn svg {
    width: 26px;
    height: 26px;
}
.omnibox {
    display: flex;
    align-items: center;
    width: 1977px;
    height: 68px;
    margin-left: 16px;
    padding: 0 33px 0 10px;
    background: #e4eadb;
    border-radius: 34px;
}
.site-info {
    display: flex;
    align-items: center;
    justify-content: center;
    width: 48px;
    height: 48px;
    background: #f7f8f0;
    border-radius: 50%;
}
.site-info svg {
    width: 24px;
    height: 24px;
}
.url {
    flex: 1;
    margin: 2px 0 0 16px;
    font: 400 27.7px Inter, sans-serif;
    color: #474a44;
    white-space: nowrap;
}
.url-host {
    color: #1f1f1f;
}
.star {
    width: 30px;
    height: 30px;
}
.ext-icon {
    width: 30px;
    height: 36px;
    margin-left: 38px;
}
.tool-sep {
    width: 3px;
    height: 32px;
    margin-left: 39px;
    background: #c4e9ae;
}
.media-icon {
    width: 32px;
    height: 30px;
    margin-left: 35px;
}
.profile {
    width: 40px;
    height: 40px;
    margin-left: 36px;
}
.update-pill {
    display: flex;
    align-items: center;
    justify-content: space-between;
    width: 373px;
    height: 68px;
    margin-left: 24px;
    padding: 0 27px 0 23px;
    background: #c8efb0;
    border-radius: 34px;
    font: 400 27.5px Roboto, sans-serif;
    color: #1c2a16;
}
.update-text {
    margin-top: 2px;
}
.update-pill svg {
    width: 8px;
    height: 30px;
}

/* app layout */
.app {
    display: flex;
    height: 1624px;
    overflow: hidden;
}
.sidebar {
    display: flex;
    flex-direction: column;
    width: 180px;
    flex: none;
    background: #1a1d20;
}
.side-top {
    display: flex;
    flex-direction: column;
    align-items: center;
    height: 368px;
    padding-top: 39px;
    background: #23282c;
}
.back-btn {
    display: flex;
    align-items: center;
    justify-content: center;
    width: 72px;
    height: 72px;
    margin-right: 20px;
    background: #1f2225;
    border-radius: 50%;
}
.back-btn svg {
    width: 24px;
    height: 14px;
}
.book {
    width: 72px;
    height: 61px;
    margin-top: 81px;
}
.progress {
    width: 81px;
    height: 31px;
    margin-top: 21px;
    background: #1a1d20;
    border-radius: 16px;
    font-size: 18px;
    line-height: 31px;
    text-align: center;
    color: #b8bec2;
}
.side-nav {
    display: flex;
    flex-direction: column;
    align-items: center;
    height: 797px;
    padding-top: 54px;
    background: #191c1f;
}
.flask {
    width: 32px;
    height: 44px;
    margin-bottom: 5px;
}
.nav-dim {
    font-size: 20px;
    line-height: 24px;
    color: #4a4f53;
}
.nav-count {
    margin-bottom: -1px;
    font-size: 18px;
}
.nav-card {
    display: flex;
    flex-direction: column;
    align-items: center;
    width: 122px;
    height: 114px;
    margin-bottom: 19px;
    padding-top: 13px;
    background: #1c1f23;
    border-radius: 8px;
    font-size: 20px;
    line-height: 26px;
    text-align: center;
    color: #dfe2e4;
    white-space: nowrap;
}
.nav-icon {
    display: flex;
    align-items: center;
    justify-content: center;
    height: 26px;
    margin-bottom: 11px;
}
.nav-icon svg {
    width: 30px;
    height: 26px;
    flex: none;
}
.nav-icon .ico-discord {
    width: 33px;
    height: 33px;
    fill: #a8b5bf;
}
.nav-icon .ico-forum {
    height: 30px;
}
.nav-card-last {
    margin-bottom: 118px;
}
.sun {
    width: 48px;
    height: 48px;
    flex: none;
}
.mode-label {
    margin-top: 16px;
    font: 700 22px/25px "Liberation Sans", sans-serif;
    text-align: center;
    color: #f0f0f0;
}
.side-user {
    display: flex;
    flex-direction: column;
    align-items: center;
    height: 359px;
    padding-top: 49px;
    background: #1c2024;
}
.avatar {
    width: 80px;
    height: 80px;
    background: #5cb8c4;
    border-radius: 50%;
    font: 500 46px/80px Inter, sans-serif;
    text-align: center;
    color: #43808c;
}
.xp {
    margin-top: 20px;
    font: 700 24px/30px "Liberation Sans", sans-serif;
    color: #f0f0f0;
}
.logo-a {
    width: 36px;
    height: 62px;
    margin-top: 63px;
}
.side-rest {
    flex: 1;
}

/* answers */
.main {
    flex: 1;
    padding-left: 455px;
}
.answers {
    display: flex;
    flex-direction: column;
    gap: 18px;
    width: 1791px;
    margin-top: -9px;
}
.answer {
    display: flex;
}
.answer-bar {
    display: flex;
    justify-content: center;
    width: 108px;
    flex: none;
    background: #7d9eb8;
}
.answer-bar-ok {
    background: #a0cb7f;
}
.answer-letter {
    margin-top: 35px;
    font-size: 60px;
    font-weight: 700;
    line-height: 82px;
}
.check-circle {
    display: flex;
    align-items: center;
    justify-content: center;
    width: 80px;
    height: 80px;
    margin-top: 36px;
    background: #fff;
    border-radius: 50%;
    box-shadow: 0 3px 8px rgba(0, 0, 0, .25);
}
.check-circle svg {
    width: 46px;
    height: 42px;
}
.answer-body {
    flex: 1;
    position: relative;
    padding: 50px 163px 52px 49px;
    border: solid #333;
    border-width: 4px 4px 4px 0;
}
.eye {
    position: absolute;
    top: 54px;
    right: 44px;
    width: 33px;
    height: 24px;
}
.answer-text {
    margin: 0 0 2px;
    font: 400 38px/42px "Liberation Serif", serif;
    color: #fff;
}
.inline-code {
    display: inline-block;
    vertical-align: top;
    padding: 0 10px;
    margin: 2px 2px 0 -3px;
    background: #2a2b27;
    border-radius: 8px;
    font: 400 30px/39px "DejaVu Sans Mono", monospace;
}
.code-box {
    padding: 9px 20px 12px 12px;
    background: #2a2b27;
}
.code {
    margin: 0 0 21px;
    padding-left: 14px;
    font: 400 34px/40px "DejaVu Sans Mono", monospace;
    letter-spacing: .12px;
    color: #d8d8d8;
    overflow: hidden;
}
.code-scroll {
    height: 16px;
    background: #d6dee2;
    border-radius: 8px;
}
.k { color: #e83e72; font-weight: 700; }
.f { color: #6a45b8; font-weight: 700; }
.o { color: #fff; font-weight: 700; }
.n { color: #2060c0; }
.s { color: #aad64a; }

/* overlays */
.review-popup {
    position: absolute;
    left: 2138px;
    top: 1334px;
    width: 501px;
    height: 199px;
    padding: 26px 50px 0;
    background: #152c5b;
    border: 2px solid #5bc8ec;
    border-radius: 52px 32px 0 52px;
    text-align: center;
}
.review-close {
    position: absolute;
    right: 18px;
    top: 7px;
    font: 700 28px/32px "Liberation Sans", sans-serif;
    color: #fff;
}
.review-title {
    margin: 0;
    font: 600 24px/29px Inter, sans-serif;
    color: #fff;
}
.review-btn {
    display: block;
    width: 264px;
    height: 70px;
    margin: 13px auto 0;
    border: 2px solid #5bc8ec;
    border-radius: 20px;
    font: 400 22px/66px Inter, sans-serif;
    color: #5bc8ec;
}
.bot-btn {
    position: absolute;
    left: 2627px;
    top: 1525px;
    display: flex;
    align-items: center;
    justify-content: center;
    width: 153px;
    height: 154px;
    background: linear-gradient(180deg, #17293a, #2f7aa6);
    border: 2px solid #4d9fc0;
    border-radius: 50%;
}
.bot-btn svg {
    width: 85px;
    height: 62px;
}
```
